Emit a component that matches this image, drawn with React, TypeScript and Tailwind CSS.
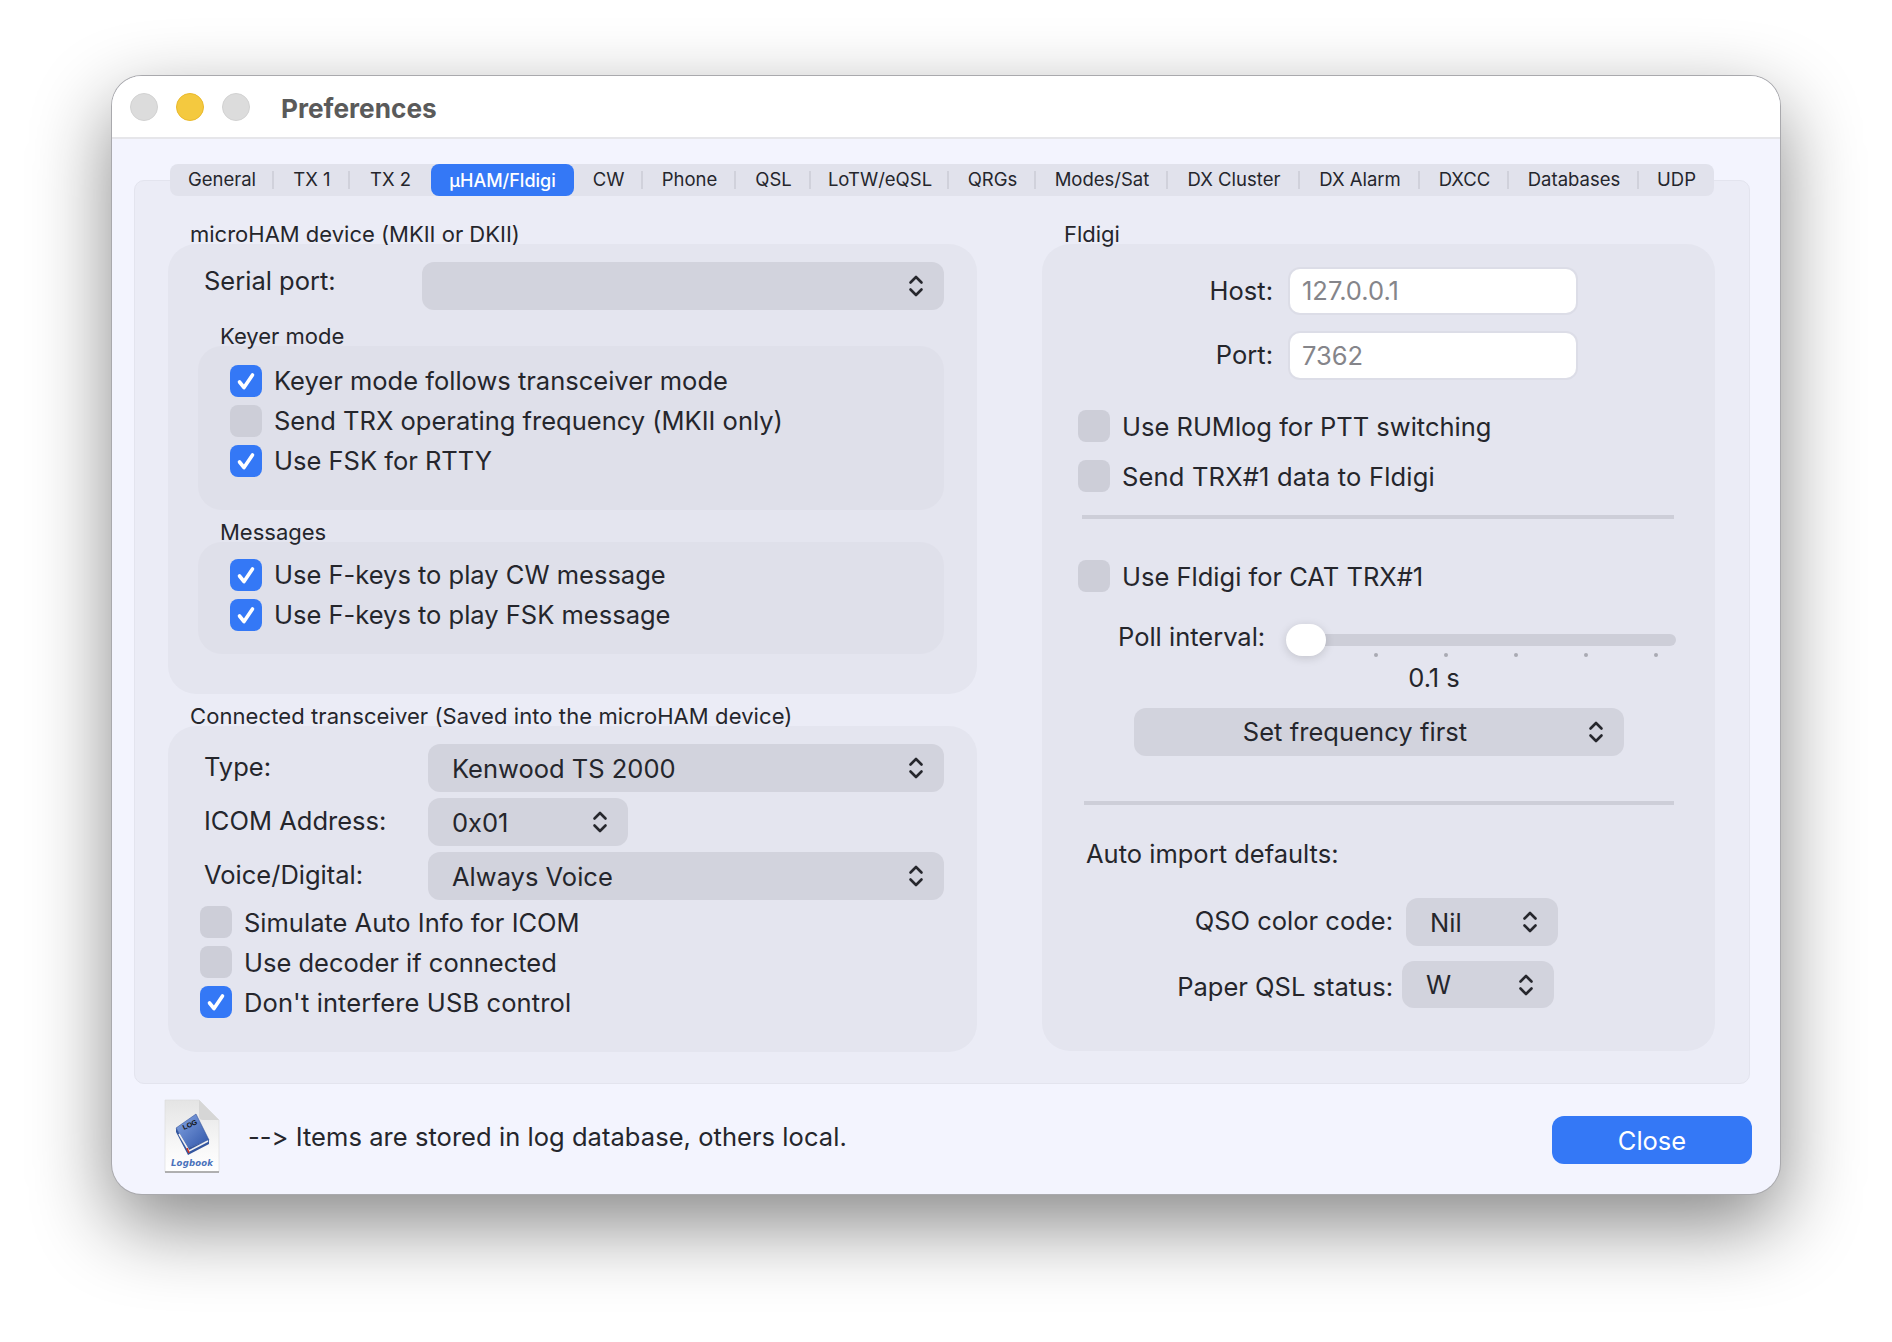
import React from "react";

const Chevrons = () => (
  <svg width="16" height="24" viewBox="0 0 16 24" fill="none" stroke="#26272d" strokeWidth="2.6" strokeLinecap="round" strokeLinejoin="round" className="shrink-0">
    <path d="M2.5 8.5 8 3l5.5 5.5" />
    <path d="M2.5 15.5 8 21l5.5-5.5" />
  </svg>
);

const Check = ({ on, label, tw = "pt-[1px]" }: { on?: boolean; label: string; tw?: string }) => (
  <div className="flex items-center h-[32px]">
    <div className={`w-[32px] h-[32px] rounded-[8px] flex items-center justify-center shrink-0 ${on ? "bg-[#3478f6]" : "bg-[#cdced8]"}`}>
      {on && (
        <svg width="22" height="22" viewBox="0 0 22 22" fill="none" stroke="#fff" strokeWidth="3.6" strokeLinecap="round" strokeLinejoin="round">
          <path d="M4.5 12l4.5 5.5L17.5 5" />
        </svg>
      )}
    </div>
    <span className={`ml-[12px] text-[25.5px] leading-[32px] whitespace-nowrap ${tw}`}>{label}</span>
  </div>
);

const Select = ({ text, className }: { text?: string; className: string }) => (
  <div className={`bg-[#d2d3dd] rounded-[12px] flex items-center justify-between text-[25.5px] shrink-0 ${className}`}>
    <span className="whitespace-nowrap pt-[2px]">{text}</span>
    <Chevrons />
  </div>
);

const tabs: { t: string; w: string }[] = [
  { t: "General", w: "w-[104px]" },
  { t: "TX 1", w: "w-[76px]" },
  { t: "TX 2", w: "w-[81px]" },
  { t: "µHAM/Fldigi", w: "w-[143px]" },
  { t: "CW", w: "w-[69px]" },
  { t: "Phone", w: "w-[93px]" },
  { t: "QSL", w: "w-[75px]" },
  { t: "LoTW/eQSL", w: "w-[138px]" },
  { t: "QRGs", w: "w-[87px]" },
  { t: "Modes/Sat", w: "w-[132px]" },
  { t: "DX Cluster", w: "w-[132px]" },
  { t: "DX Alarm", w: "w-[120px]" },
  { t: "DXCC", w: "w-[89px]" },
  { t: "Databases", w: "w-[130px]" },
  { t: "UDP", w: "w-[75px]" },
];

const Logbook = () => (
  <svg width="60" height="76" viewBox="0 0 60 76" className="shrink-0">
    <defs>
      <linearGradient id="paper" x1="0" y1="0" x2="0" y2="1">
        <stop offset="0" stopColor="#e4e4e4" />
        <stop offset="0.65" stopColor="#f8f8f8" />
        <stop offset="1" stopColor="#ffffff" />
      </linearGradient>
      <linearGradient id="cover" x1="0" y1="0" x2="1" y2="1">
        <stop offset="0" stopColor="#86a6e4" />
        <stop offset="1" stopColor="#2f55a8" />
      </linearGradient>
    </defs>
    <path d="M3 2h34l20 20v52H3z" fill="url(#paper)" stroke="#dadada" strokeWidth="0.6" />
    <path d="M37 2l20 20H41q-4 0-4-4z" fill="#d6d6d6" />
    <path d="M3 74h54" stroke="#9a9a9a" strokeWidth="1.5" />
    <path d="M14 30 34 16l13 26-21 8z" fill="url(#cover)" stroke="#25458c" strokeWidth="0.5" />
    <path d="M14 30v4l12 23 21-11v-4l-21 8z" fill="#33569f" />
    <path d="M17 36l10 17 19-10" fill="none" stroke="#f0f0f0" strokeWidth="1.6" />
    <path d="M25 50l2 5" stroke="#cc3322" strokeWidth="1.6" />
    <text x="22" y="32" fontSize="7" fontWeight="700" fill="#111" transform="rotate(-25 22 32)" fontFamily="Liberation Sans">LOG</text>
    <text x="9" y="68" fontSize="8.5" fontWeight="700" fontStyle="italic" fill="#4a72bb" fontFamily="DejaVu Sans" letterSpacing="0.2">Logbook</text>
  </svg>
);

export default function App() {
  return (
    <div className="w-[1892px] h-[1342px] bg-white pt-[76px] pl-[112px] overflow-hidden font-['Inter','Liberation_Sans',sans-serif] text-[#25262c] [font-feature-settings:'calt'_0]">
      <div className="w-[1668px] h-[1118px] rounded-[30px] overflow-visible bg-[#f3f4fe] shadow-[0_0_0_1px_#a9a9ad,0_30px_80px_rgba(0,0,0,0.48)] flex flex-col">
        {/* title bar */}
        <div className="h-[63px] bg-white rounded-t-[30px] border-b-2 border-[#e6e6ea] flex items-center shrink-0 pt-[1px]">
          <div className="ml-[18px] w-[28px] h-[28px] rounded-full bg-[#dcdcdc] border border-[#d2d2d2]" />
          <div className="ml-[18px] w-[28px] h-[28px] rounded-full bg-[#f4c93f] border border-[#eab92b]" />
          <div className="ml-[18px] w-[28px] h-[28px] rounded-full bg-[#dcdcdc] border border-[#d2d2d2]" />
          <span className="ml-[31px] pt-[4px] text-[26.2px] font-bold text-[#5a5a5a]">Preferences</span>
        </div>

        {/* tab strip */}
        <div className="relative z-10 ml-[58px] mt-[25px] w-[1544px] h-[32px] bg-[#e1e2ec] rounded-[8px] flex items-center text-[18.5px] shrink-0">
          {tabs.map(({ t, w }, i) => {
            const active = t.startsWith("µ");
            const sep = i < tabs.length - 1 && !active && !tabs[i + 1].t.startsWith("µ");
            return (
              <div key={t} className={`relative h-[32px] flex items-center justify-center whitespace-nowrap rounded-[8px] shrink-0 ${w} ${active ? "bg-[#3478f6] text-white font-medium text-[18px]" : ""}`}>
                {t}
                {sep && <div className="absolute right-0 top-[7px] w-[2px] h-[18px] bg-[#d0d1db]" />}
              </div>
            );
          })}
        </div>

        {/* panel */}
        <div className="ml-[22px] -mt-[16px] w-[1616px] h-[904px] bg-[#ebecf6] border border-[#e3e4ee] rounded-[10px] pt-[38px] pl-[33px] flex gap-[65px] shrink-0">
          {/* left column */}
          <div className="w-[809px] shrink-0">
            <div className="h-[25px] leading-[30px] text-[22px] pl-[22px] whitespace-nowrap">microHAM device (MKII or DKII)</div>
            <div className="h-[450px] bg-[#e4e5ef] rounded-[28px] pt-[18px]">
              <div className="flex items-start">
                <div className="w-[254px] pl-[36px] h-[38px] leading-[38px] text-[25.5px]">Serial port:</div>
                <Select className="w-[522px] h-[48px] pl-[16px] pr-[20px] justify-end" />
              </div>
              <div className="mt-[11px] h-[25px] leading-[30px] text-[22px] pl-[52px]">Keyer mode</div>
              <div className="ml-[30px] w-[746px] h-[164px] bg-[#dfe0ea] rounded-[24px] pt-[19px] pl-[32px] flex flex-col gap-[8px]">
                <Check on tw="" label="Keyer mode follows transceiver mode" />
                <Check tw="" label="Send TRX operating frequency (MKII only)" />
                <Check on tw="" label="Use FSK for RTTY" />
              </div>
              <div className="mt-[7px] h-[25px] leading-[30px] text-[22px] pl-[52px]">Messages</div>
              <div className="ml-[30px] w-[746px] h-[112px] bg-[#dfe0ea] rounded-[24px] pt-[17px] pl-[32px] flex flex-col gap-[8px]">
                <Check on tw="" label="Use F-keys to play CW message" />
                <Check on tw="" label="Use F-keys to play FSK message" />
              </div>
            </div>

            <div className="mt-[7px] h-[25px] leading-[30px] text-[22px] pl-[22px] whitespace-nowrap tracking-[0.09px]">Connected transceiver (Saved into the microHAM device)</div>
            <div className="h-[326px] bg-[#e4e5ef] rounded-[28px] pt-[18px]">
              <div className="flex items-center">
                <div className="w-[260px] pl-[36px] text-[25.5px] -mt-[2px]">Type:</div>
                <Select text="Kenwood TS 2000" className="w-[516px] h-[48px] pl-[24px] pr-[20px]" />
              </div>
              <div className="flex items-center mt-[6px]">
                <div className="w-[260px] pl-[36px] text-[25.5px] -mt-[1px]">ICOM Address:</div>
                <Select text="0x01" className="w-[200px] h-[48px] pl-[24px] pr-[20px]" />
              </div>
              <div className="flex items-center mt-[6px]">
                <div className="w-[260px] pl-[36px] text-[25.5px] -mt-[2px]">Voice/Digital:</div>
                <Select text="Always Voice" className="w-[516px] h-[48px] pl-[24px] pr-[20px]" />
              </div>
              <div className="mt-[6px] pl-[32px] flex flex-col gap-[8px]">
                <Check label="Simulate Auto Info for ICOM" />
                <Check label="Use decoder if connected" />
                <Check on label="Don't interfere USB control" tw="pt-[1px] tracking-[0.12px]" />
              </div>
            </div>
          </div>

          {/* right column */}
          <div className="w-[673px] shrink-0">
            <div className="h-[25px] leading-[30px] text-[22px] pl-[22px]">Fldigi</div>
            <div className="h-[807px] bg-[#e4e5ef] rounded-[28px] pt-[25px]">
              <div className="flex items-center">
                <div className="w-[231px] text-right text-[25.5px]">Host:</div>
                <div className="ml-[17px] w-[286px] h-[44px] bg-white rounded-[10px] shadow-[0_0_0_2px_#dcdde7] pl-[12px] flex items-center text-[25.5px] text-[#85858a]">127.0.0.1</div>
              </div>
              <div className="flex items-center mt-[20px]">
                <div className="w-[231px] text-right text-[25.5px]">Port:</div>
                <div className="ml-[17px] w-[286px] h-[45px] bg-white rounded-[10px] shadow-[0_0_0_2px_#dcdde7] pl-[12px] pt-[1px] flex items-center text-[25.5px] text-[#85858a]">7362</div>
              </div>
              <div className="mt-[32px] pl-[36px] flex flex-col gap-[18px]">
                <Check label="Use RUMlog for PTT switching" />
                <Check label="Send TRX#1 data to Fldigi" tw="pt-[1px] tracking-[0.18px]" />
              </div>
              <div className="mt-[23px] ml-[40px] w-[592px] h-[4px] bg-[#cdced8]" />
              <div className="mt-[41px] pl-[36px]">
                <Check label="Use Fldigi for CAT TRX#1" />
              </div>
              <div className="mt-[32px] flex items-center h-[32px]">
                <div className="w-[244px] pl-[76px] text-[25.5px] whitespace-nowrap -mt-[6px]">Poll interval:</div>
                <div className="relative w-[390px] h-[12px] bg-[#cdced8] rounded-full">
                  <div className="absolute left-0 -top-[10px] w-[40px] h-[32px] rounded-full bg-white shadow-[0_2px_10px_rgba(0,0,0,0.15)]" />
                </div>
              </div>
              <div className="-mt-[3px] ml-[332px] flex gap-[66px]">
                {[0, 1, 2, 3, 4].map((i) => (
                  <div key={i} className="w-[4px] h-[4px] rounded-full bg-[#a9aab3]" />
                ))}
              </div>
              <div className="mt-[7px] h-[28px] leading-[28px] ml-[362px] w-[60px] text-center text-[25.5px] whitespace-nowrap">0.1 s</div>
              <div className="mt-[16px] ml-[92px] w-[490px] h-[48px] bg-[#d2d3dd] rounded-[12px] flex items-center text-[25.5px] pr-[20px]">
                <span className="flex-1 text-center pl-[5px] pr-[17px] pt-[1px] tracking-[0.05px]">Set frequency first</span>
                <Chevrons />
              </div>
              <div className="mt-[45px] ml-[42px] w-[590px] h-[4px] bg-[#cdced8]" />
              <div className="mt-[34px] h-[30px] leading-[30px] pl-[44px] text-[25.5px]">Auto import defaults:</div>
              <div className="mt-[29px] flex items-center">
                <div className="w-[351px] text-right text-[25.5px] -mt-[2px] whitespace-nowrap">QSO color code:</div>
                <Select text="Nil" className="ml-[13px] w-[152px] h-[48px] pl-[24px] pr-[20px]" />
              </div>
              <div className="mt-[15px] flex items-center">
                <div className="w-[351px] text-right text-[25.5px] mt-[5px] whitespace-nowrap">Paper QSL status:</div>
                <Select text="W" className="ml-[9px] w-[152px] h-[47px] pl-[24px] pr-[20px]" />
              </div>
            </div>
          </div>
        </div>

        {/* footer */}
        <div className="flex items-start pl-[50px] pt-[14px]">
          <Logbook />
          <div className="ml-[26px] mt-[23px] text-[25.5px] leading-[32px] whitespace-nowrap tracking-[0.05px]">--&gt; Items are stored in log database, others local.</div>
          <div className="ml-auto mr-[28px] mt-[18px] w-[200px] h-[48px] rounded-[12px] bg-[#3478f6] text-white text-[25.5px] pt-[2px] flex items-center justify-center">Close</div>
        </div>
      </div>
    </div>
  );
}
